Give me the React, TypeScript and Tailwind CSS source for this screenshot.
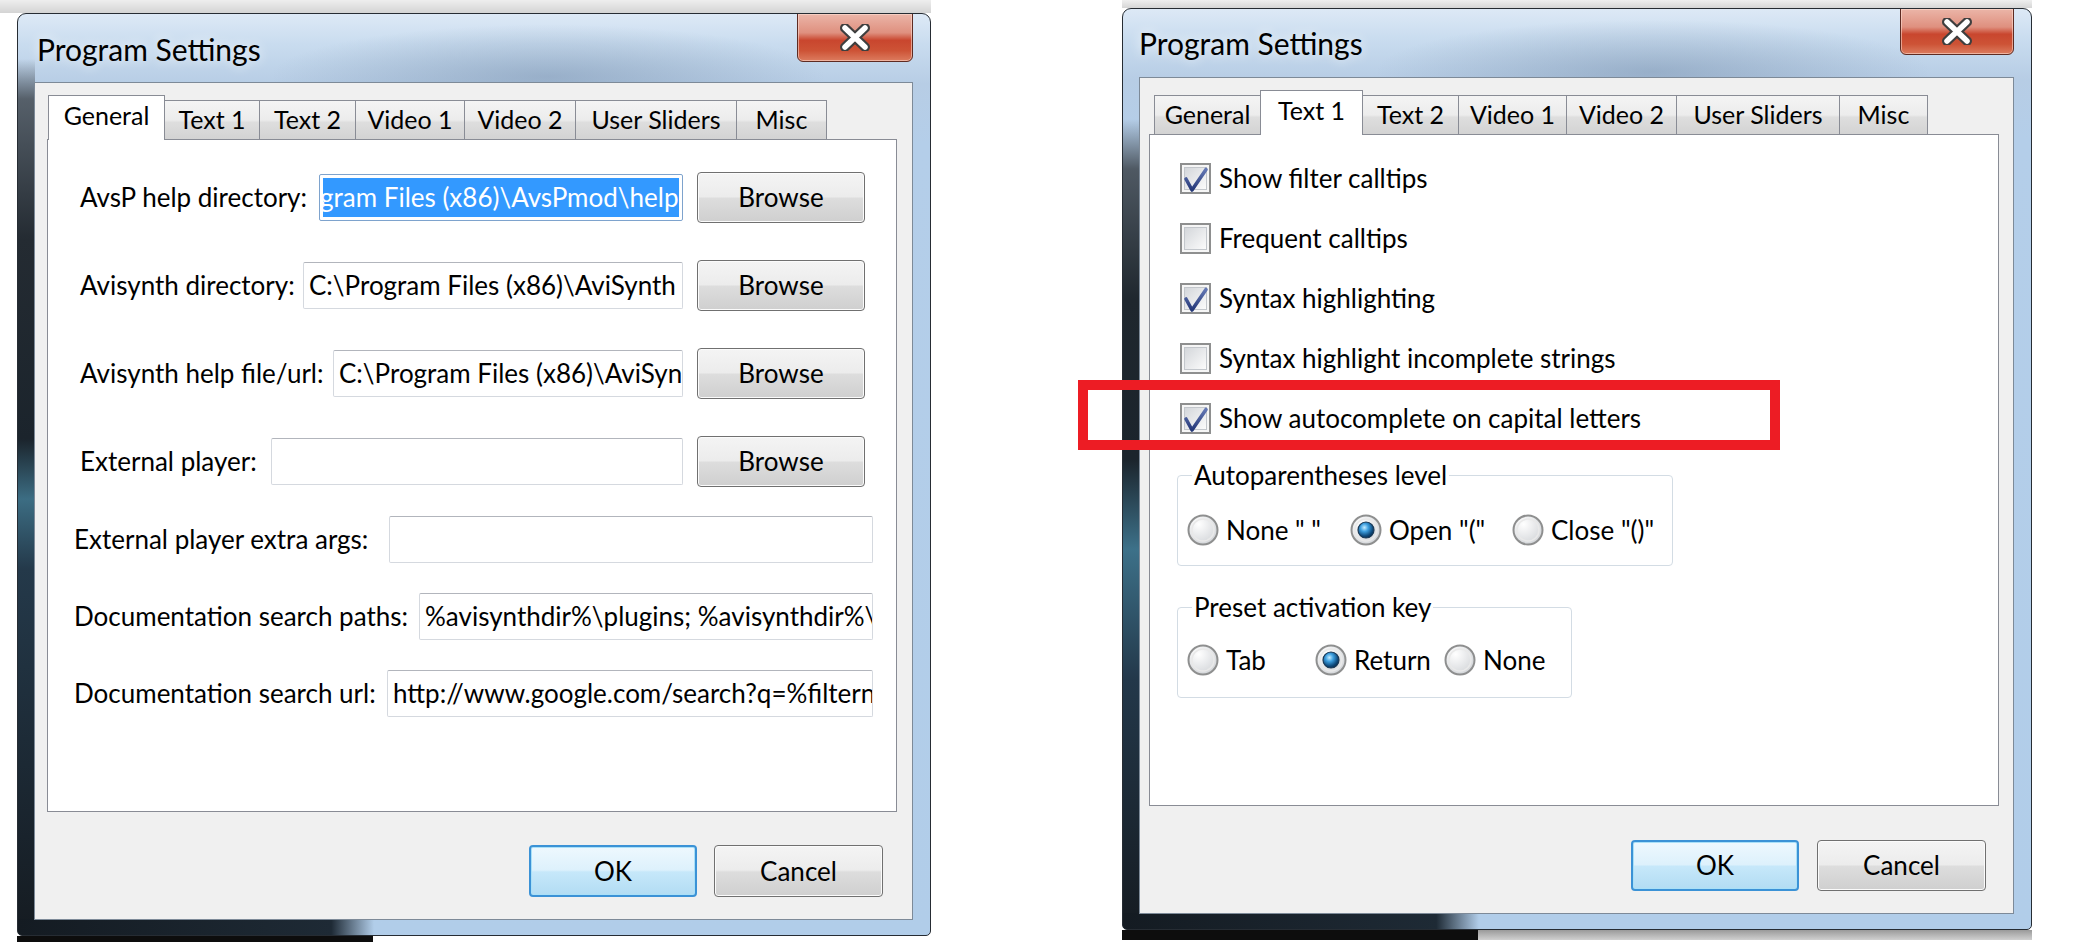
import React from "react";

type Tab = { label: string; w: string };

const generalTabs: Tab[] = [
  { label: "General", w: "w-[117px]" },
  { label: "Text 1", w: "w-[94px]" },
  { label: "Text 2", w: "w-[96px]" },
  { label: "Video 1", w: "w-[109px]" },
  { label: "Video 2", w: "w-[111px]" },
  { label: "User Sliders", w: "w-[161px]" },
  { label: "Misc", w: "w-[91px]" },
];

const textTabs: Tab[] = [
  { label: "General", w: "w-[106px]" },
  { label: "Text 1", w: "w-[103px]" },
  { label: "Text 2", w: "w-[95px]" },
  { label: "Video 1", w: "w-[108px]" },
  { label: "Video 2", w: "w-[110px]" },
  { label: "User Sliders", w: "w-[163px]" },
  { label: "Misc", w: "w-[89px]" },
];

const btnGray =
  "rounded-[4px] border border-[#707070] bg-[linear-gradient(to_bottom,#f4f4f4_0%,#ececec_48%,#dddddd_52%,#cfcfcf_100%)] shadow-[inset_0_0_0_1px_#fbfbfb]";
const btnBlue =
  "rounded-[4px] border-2 border-[#3b92d6] bg-[linear-gradient(to_bottom,#eef8fe_0%,#ddf1fc_48%,#c6e8fa_52%,#b2dcf3_100%)] shadow-[inset_0_0_0_1px_#a9e0f8]";

const CloseButton = ({ className }: { className: string }) => (
  <div
    className={`flex shrink-0 items-center justify-center rounded-b-[6px] border border-[#5e2b22] bg-[linear-gradient(to_bottom,#ebb5a8_0%,#df907f_40%,#c9462e_56%,#cd5336_78%,#dc7c5f_100%)] shadow-[inset_0_0_0_1px_rgba(255,225,215,0.55)] ${className}`}
  >
    <svg width="32" height="27" viewBox="0 0 32 27">
      <path d="M6 4 L26 23 M26 4 L6 23" stroke="#3f3f3f" strokeWidth="10" strokeLinecap="round" fill="none" />
      <path d="M6 4 L26 23 M26 4 L6 23" stroke="#ffffff" strokeWidth="5.5" strokeLinecap="round" fill="none" />
    </svg>
  </div>
);

const CheckBox = ({ checked }: { checked: boolean }) => (
  <svg width="31" height="31" viewBox="0 0 31 31" className="shrink-0">
    <defs>
      <linearGradient id="cbFill" x1="0" y1="0" x2="1" y2="1">
        <stop offset="0" stopColor="#d3d6da" />
        <stop offset="1" stopColor="#fcfcfc" />
      </linearGradient>
      <linearGradient id="cbMark" x1="0" y1="0" x2="0" y2="1">
        <stop offset="0" stopColor="#6478b4" />
        <stop offset="1" stopColor="#243777" />
      </linearGradient>
    </defs>
    <rect x="1" y="1" width="29" height="29" fill="#f6f6f6" stroke="#8e8f8f" strokeWidth="2" />
    <rect x="4.5" y="4.5" width="22" height="22" fill="url(#cbFill)" stroke="#c3c7cc" />
    {checked && (
      <path
        d="M6 16 L12 27 L26 6.5"
        fill="none"
        stroke="url(#cbMark)"
        strokeWidth="3.6"
        strokeLinecap="round"
        strokeLinejoin="round"
      />
    )}
  </svg>
);

const Radio = ({ checked }: { checked: boolean }) => (
  <svg width="32" height="32" viewBox="0 0 32 32" className="shrink-0">
    <defs>
      <radialGradient id="rbBg" cx="0.35" cy="0.3" r="0.85">
        <stop offset="0" stopColor="#ffffff" />
        <stop offset="1" stopColor="#cdd0d4" />
      </radialGradient>
      <radialGradient id="rbDot" cx="0.4" cy="0.35" r="0.7">
        <stop offset="0" stopColor="#c4ecff" />
        <stop offset="0.35" stopColor="#3d9fdf" />
        <stop offset="0.75" stopColor="#0e4a7c" />
        <stop offset="1" stopColor="#07294a" />
      </radialGradient>
    </defs>
    <circle cx="16" cy="16" r="14.5" fill="url(#rbBg)" stroke="#8e8f8f" strokeWidth="2" />
    <circle cx="16" cy="16" r="11" fill="none" stroke="#e9e9e9" strokeWidth="1.5" />
    {checked && <circle cx="16" cy="16" r="8" fill="url(#rbDot)" stroke="#1b3955" strokeWidth="1.2" />}
  </svg>
);

const TabStrip = ({ tabs, active, className }: { tabs: Tab[]; active: number; className: string }) => (
  <div className={`relative z-10 -mb-px flex h-[45px] items-end ${className}`}>
    {tabs.map((t, i) =>
      i === active ? (
        <div
          key={t.label}
          className={`${t.w} flex h-[45px] shrink-0 items-center justify-center border border-b-0 border-[#898c95] bg-white pb-[4px] text-[25px]`}
        >
          {t.label}
        </div>
      ) : (
        <div
          key={t.label}
          className={`${t.w} mb-px flex h-[39px] shrink-0 items-center justify-center border-t border-[#898c95] bg-[linear-gradient(to_bottom,#f4f4f4_0%,#ececec_50%,#dedede_56%,#d3d3d3_100%)] text-[25px] ${
            i === active + 1 ? "" : "border-l"
          } ${i === tabs.length - 1 ? "border-r" : ""}`}
        >
          {t.label}
        </div>
      )
    )}
  </div>
);

const Field = ({ text, selected = false }: { text: string; selected?: boolean }) =>
  selected ? (
    <div className="flex h-[47px] min-w-0 flex-1 rounded-[2px] border border-[#7ea3cd] bg-white p-[3px]">
      <div className="flex h-full w-full items-center overflow-hidden whitespace-nowrap bg-[#3399ff] text-white">
        <span className="-ml-[3px]">{text}</span>
      </div>
    </div>
  ) : (
    <div className="flex h-[47px] min-w-0 flex-1 items-center overflow-hidden whitespace-nowrap rounded-[2px] border border-[#d5d9df] border-t-[#b2b5bc] bg-white pl-[5px]">
      {text}
    </div>
  );

const FrameDecor = ({ strip }: { strip: string }) => (
  <>
    <div className="absolute left-[250px] top-[10px] h-[75px] w-[560px] bg-[radial-gradient(ellipse_at_50%_70%,rgba(105,130,160,0.42)_0%,rgba(105,130,160,0)_70%)]" />
    <div className={`absolute bottom-0 left-0 w-[17px] ${strip}`} />
    <div className="absolute bottom-0 left-0 h-[16px] w-[356px] bg-[linear-gradient(to_right,#141b22_0%,#1e2a35_88%,rgba(30,42,53,0)_100%)]" />
  </>
);

const App = () => {
  return (
    <div className="relative flex h-[946px] w-[2094px] items-start overflow-hidden bg-white font-['Lato',sans-serif] text-[26px] text-black">
      {/* Left dialog: General tab */}
      <div className="flex w-[931px] shrink-0 flex-col">
        <div className="h-[13px] w-full bg-[linear-gradient(to_bottom,#eeeeee,#d4d4d4)]" />
        <div className="pl-[17px]">
          <div className="relative flex h-[923px] w-[914px] flex-col overflow-hidden rounded-t-[9px] rounded-b-[5px] border border-[#262c33] bg-[linear-gradient(to_bottom,#dde9f6_0px,#c9dcef_30px,#b7cde5_70px,#b4cee9_130px,#b1cde9_100%)]">
            <FrameDecor strip="top-[45px] bg-[linear-gradient(to_bottom,rgba(60,70,80,0)_0px,#56606a_40px,#242b32_180px,#1b242c_380px,#3c6d83_440px,#24394a_510px,#151b21_100%)]" />
            <div className="relative flex h-[68px] shrink-0 items-start">
              <div className="pl-[19px] pt-[17px] text-[30px] leading-[36px] [text-shadow:0_0_12px_rgba(255,255,255,0.95)]">
                Program Settings
              </div>
              <CloseButton className="ml-auto mr-[17px] -mt-px h-[49px] w-[116px]" />
            </div>
            <div className="relative mb-[15px] ml-[16px] mr-[17px] flex flex-1 flex-col border border-[#7d8a98] bg-[#f0f0f0] pl-[12px] pr-[15px] pt-[12px]">
              <TabStrip tabs={generalTabs} active={0} className="pl-[1px]" />
              <div className="flex h-[673px] flex-col border border-[#898c95] bg-white">
                <div className="flex flex-col gap-[37px] pl-[32px] pr-[31px] pt-[32px]">
                  {[
                    { label: "AvsP help directory:", w: "w-[239px]", text: "gram Files (x86)\\AvsPmod\\help", sel: true },
                    { label: "Avisynth directory:", w: "w-[223px]", text: "C:\\Program Files (x86)\\AviSynth 2.5", sel: false },
                    { label: "Avisynth help file/url:", w: "w-[253px]", text: "C:\\Program Files (x86)\\AviSynth 2.5\\Docs\\English\\index.htm", sel: false },
                    { label: "External player:", w: "w-[191px]", text: "", sel: false },
                  ].map((r) => (
                    <div key={r.label} className="flex h-[51px] items-center">
                      <div className={`${r.w} shrink-0 whitespace-nowrap`}>{r.label}</div>
                      <Field text={r.text} selected={r.sel} />
                      <button className={`ml-[14px] h-[51px] w-[168px] shrink-0 ${btnGray}`}>Browse</button>
                    </div>
                  ))}
                </div>
                <div className="mt-[29px] flex flex-col gap-[30px] pl-[26px] pr-[23px]">
                  {[
                    { label: "External player extra args:", w: "w-[315px]", text: "" },
                    { label: "Documentation search paths:", w: "w-[345px]", text: "%avisynthdir%\\plugins; %avisynthdir%\\plugins\\docs" },
                    { label: "Documentation search url:", w: "w-[313px]", text: "http://www.google.com/search?q=%filtername% Avisynth" },
                  ].map((r) => (
                    <div key={r.label} className="flex h-[47px] items-center">
                      <div className={`${r.w} shrink-0 whitespace-nowrap`}>{r.label}</div>
                      <Field text={r.text} />
                    </div>
                  ))}
                </div>
              </div>
              <div className="mr-[14px] mt-[33px] flex justify-end gap-[17px]">
                <button className={`h-[52px] w-[168px] ${btnBlue}`}>OK</button>
                <button className={`h-[52px] w-[169px] ${btnGray}`}>Cancel</button>
              </div>
            </div>
          </div>
        </div>
        <div className="ml-[17px] h-[6px] w-[356px] bg-[#0d0d0d]" />
      </div>

      {/* Right dialog: Text 1 tab */}
      <div className="ml-[191px] flex w-[910px] shrink-0 flex-col">
        <div className="h-[8px] w-full bg-[linear-gradient(to_bottom,#efefef,#d6d6d6)]" />
        <div className="relative flex h-[922px] w-[910px] flex-col overflow-hidden rounded-t-[9px] rounded-b-[5px] border border-[#262c33] bg-[linear-gradient(to_bottom,#dde9f6_0px,#c9dcef_30px,#b7cde5_70px,#b4cee9_130px,#b1cde9_100%)]">
          <FrameDecor strip="top-[110px] bg-[linear-gradient(to_bottom,rgba(60,70,80,0)_0px,#4f5963_50px,#1f272e_180px,#1b242c_340px,#3d7189_430px,#23384a_560px,#151b21_100%)]" />
          <div className="relative flex h-[68px] shrink-0 items-start">
            <div className="pl-[16px] pt-[16px] text-[30px] leading-[36px] [text-shadow:0_0_12px_rgba(255,255,255,0.95)]">
              Program Settings
            </div>
            <CloseButton className="ml-auto mr-[17px] -mt-px h-[47px] w-[114px]" />
          </div>
          <div className="relative mb-[15px] ml-[16px] mr-[17px] flex flex-1 flex-col border border-[#7d8a98] bg-[#f0f0f0] pl-[9px] pr-[14px] pt-[12px]">
            <TabStrip tabs={textTabs} active={1} className="pl-[5px]" />
            <div className="flex h-[672px] flex-col border border-[#898c95] bg-white pl-[27px] pt-[28px]">
              <div className="flex flex-col gap-[29px] pl-[3px]">
                {[
                  { label: "Show filter calltips", on: true },
                  { label: "Frequent calltips", on: false },
                  { label: "Syntax highlighting", on: true },
                  { label: "Syntax highlight incomplete strings", on: false },
                  { label: "Show autocomplete on capital letters", on: true },
                ].map((c) => (
                  <div key={c.label} className="flex h-[31px] items-center gap-[8px] whitespace-nowrap">
                    <CheckBox checked={c.on} />
                    <span>{c.label}</span>
                  </div>
                ))}
              </div>
              <fieldset className="mt-[26px] w-[496px] rounded-[4px] border border-[#d3dce4] pb-[19px] pl-[9px]">
                <legend className="ml-[5px] px-[2px] leading-[30px]">Autoparentheses level</legend>
                <div className="mt-[24px] flex h-[32px] items-center">
                  <div className="flex w-[163px] items-center gap-[7px]">
                    <Radio checked={false} />
                    <span>None " "</span>
                  </div>
                  <div className="flex w-[162px] items-center gap-[7px]">
                    <Radio checked={true} />
                    <span>Open "("</span>
                  </div>
                  <div className="flex items-center gap-[7px]">
                    <Radio checked={false} />
                    <span>Close "()"</span>
                  </div>
                </div>
              </fieldset>
              <fieldset className="mt-[26px] w-[395px] rounded-[4px] border border-[#d3dce4] pb-[21px] pl-[9px]">
                <legend className="ml-[5px] px-[2px] leading-[30px]">Preset activation key</legend>
                <div className="mt-[22px] flex h-[32px] items-center">
                  <div className="flex w-[128px] items-center gap-[7px]">
                    <Radio checked={false} />
                    <span>Tab</span>
                  </div>
                  <div className="flex w-[129px] items-center gap-[7px]">
                    <Radio checked={true} />
                    <span>Return</span>
                  </div>
                  <div className="flex items-center gap-[7px]">
                    <Radio checked={false} />
                    <span>None</span>
                  </div>
                </div>
              </fieldset>
            </div>
            <div className="mr-[13px] mt-[34px] flex justify-end gap-[18px]">
              <button className={`h-[51px] w-[168px] ${btnBlue}`}>OK</button>
              <button className={`h-[51px] w-[169px] ${btnGray}`}>Cancel</button>
            </div>
          </div>
        </div>
        <div className="flex h-[10px] w-[910px]">
          <div className="h-full w-[356px] bg-[#0d0d0d]" />
          <div className="h-full flex-1 bg-[linear-gradient(to_bottom,#9a9a9a,#d0d0d0)]" />
        </div>
      </div>

      {/* Red annotation box */}
      <div className="absolute left-[1078px] top-[380px] h-[70px] w-[702px] border-[10px] border-[#ed1c24]" />
    </div>
  );
};

export default App;
